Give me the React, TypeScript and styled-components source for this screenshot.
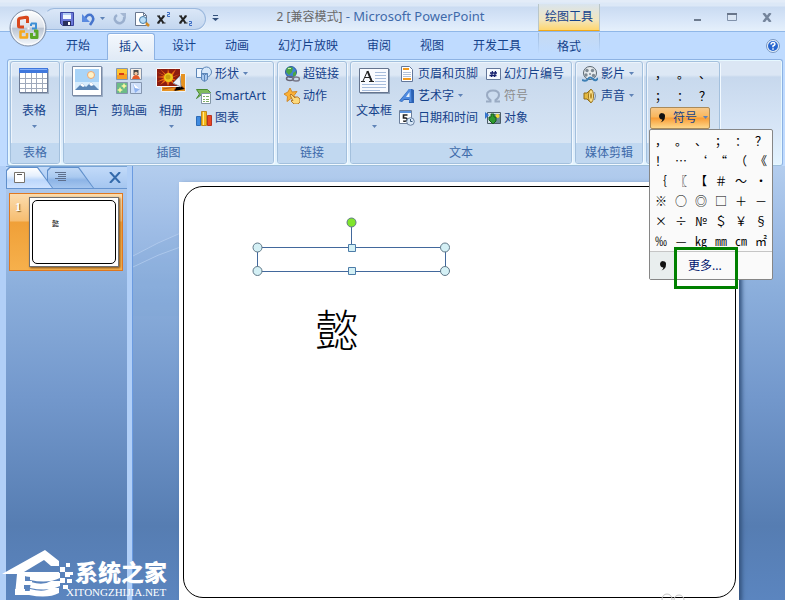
import React from "react";
import styled, { createGlobalStyle, css } from "styled-components";

const ui = `"Noto Sans", "Noto Sans CJK SC", sans-serif`;
const cjk = `"Noto Sans CJK SC", sans-serif`;

const Global = createGlobalStyle`
  * { box-sizing: border-box; }
  body { margin: 0; background: #bfdbff; font: 12px/16px ${ui}; color: #15428b; }
  button { font: inherit; color: inherit; background: none; border: 0; padding: 0; margin: 0; cursor: default; white-space: nowrap; }
  svg { display: block; flex: none; }
`;

const Window = styled.div`
  position: relative;
  height: 100vh;
  min-height: 400px;
  display: flex;
  flex-direction: column;
  overflow: hidden;
  background: #bfdbff;
`;

const TitleBar = styled.header`
  display: flex;
  align-items: stretch;
  height: 32px;
  padding-left: 44px;
  background: linear-gradient(#e3ecf8 0 2px, #dce8f7 3px 6px, #cadbf2 7px, #d8e6f8 20px, #e4effb 30px);
  border-bottom: 1px solid #8fb7e8;
`;

const QuickAccess = styled.div`
  display: flex;
  align-items: center;
  align-self: flex-start;
  gap: 6px;
  width: 162px;
  height: 22px;
  margin-top: 8px;
  padding-left: 14px;
  border: 1px solid #9cb9de;
  border-left-color: transparent;
  border-radius: 10px 11px 11px 0;
  background: linear-gradient(#dbe7f8, #cfdff3 50%, #c3d6ef);
  box-shadow: 0 1px 0 #f4f9ff;
`;

const IconButton = styled.button`
  display: flex;
  align-items: center;
  justify-content: center;
  gap: 4px;
  height: 20px;
  min-width: 16px;
`;

const More = styled(IconButton)`
  margin: 8px 0 0 1px;
`;

const Title = styled.h1`
  flex: 0 1 315px;
  margin: 0;
  padding-top: 8px;
  text-align: center;
  font-size: 13px;
  line-height: 16px;
  font-weight: 400;
  white-space: nowrap;
  overflow: hidden;
  color: #3e6aaa;
  span { font-size: 12px; color: #696969; }
`;

const ContextTitle = styled.div`
  width: 62px;
  margin-top: 4px;
  padding-top: 5px;
  text-align: center;
  white-space: nowrap;
  border: solid #b9c6c9;
  border-width: 0 1px;
  border-bottom: 1px solid #f0a818;
  background: linear-gradient(#d9e4ee, #f1e6c0 60%, #ffd66e);
`;

const WindowButtons = styled.div`
  display: flex;
  gap: 19px;
  margin-left: auto;
  padding: 7px 10px 0 0;
`;

const Orb = styled.button`
  position: absolute;
  left: 9px;
  top: 9px;
`;

const TabRow = styled.nav`
  display: flex;
  align-items: stretch;
  gap: 5px;
  height: 27px;
  padding: 1px 4px 0 54px;
  background: #bfdbff;
`;

const Tab = styled.button<{ $active?: boolean }>`
  padding: 0 12px;
  ${(p) =>
    p.$active &&
    css`
      border: 1px solid #8db2e3;
      border-bottom: 0;
      border-radius: 3px 3px 0 0;
      padding: 0 11px;
      margin-bottom: -1px;
      z-index: 1;
      background: linear-gradient(#f4f8fd, #e0eaf6);
      box-shadow: inset 0 1px 0 #fff;
    `}
`;

const ContextTab = styled.button`
  width: 62px;
  margin-bottom: 6px;
  padding-top: 6px;
  border: 1px solid;
  border-width: 0 1px;
  border-image: linear-gradient(#9db9dc, #bfdbff) 1;
  background: linear-gradient(#c6daf2, #bfdbff);
`;

const Help = styled(IconButton)`
  margin-left: auto;
  align-self: center;
`;

const Ribbon = styled.section`
  display: flex;
  gap: 3px;
  margin: 0 2px 0 7px;
  padding: 1px 2px;
  border: 1px solid #8db2e3;
  border-bottom-color: #9ebfdb;
  border-radius: 3px;
  background: linear-gradient(#dbe6f4 0 15px, #c7d8ed 17px, #d8e6f7 70px, #e3f4ff);
  box-shadow: inset 0 0 0 1px #e6f8ff;
`;

const Group = styled.section<{ $w: number }>`
  display: flex;
  flex-direction: column;
  flex: none;
  width: ${(p) => p.$w}px;
  border: 1px solid #a3c0dd;
  border-radius: 3px;
  background: linear-gradient(#dde8f5 0 13px, #c8d9ed 16px, #dbe8f6);
  box-shadow: 1px 1px 0 #f2f9ff, inset 1px 1px 0 #edf4fc;
`;

const GroupBody = styled.div`
  display: flex;
  height: 81px;
  padding: 1px 2px 0;
`;

const GroupLabel = styled.h2`
  height: 20px;
  margin: 0;
  padding-top: 1px;
  text-align: center;
  font-size: 12px;
  font-weight: 400;
  line-height: 18px;
  color: #3e6aaa;
  background: #c1d8f0;
  border-radius: 0 0 2px 2px;
`;

const BigButton = styled.button`
  display: flex;
  flex-direction: column;
  align-items: center;
  align-self: flex-start;
  width: 42px;
  padding-top: 2px;
  gap: 6px;
`;

const Column = styled.div`
  display: flex;
  flex-direction: column;
  align-items: flex-start;
`;

const SmallButton = styled.button<{ $off?: boolean }>`
  display: flex;
  align-items: center;
  gap: 3px;
  height: 22px;
  padding: 0 3px 0 4px;
  color: ${(p) => (p.$off ? "#8d8d8d" : "#15428b")};
`;

const SymbolColumn = styled.div`
  position: relative;
  padding-left: 1px;
`;

const SymbolRow = styled.div<{ $cols: number; $cell: number }>`
  display: grid;
  grid-template-columns: repeat(${(p) => p.$cols}, ${(p) => p.$cell}px);
`;

const Glyph = styled.button<{ $h: number }>`
  height: ${(p) => p.$h}px;
  font: 12px/16px ${cjk};
  color: #000;
`;

const SymbolButton = styled.button`
  display: flex;
  align-items: center;
  gap: 5px;
  width: 60px;
  height: 22px;
  padding: 0 3px 0 5px;
  border: 1px solid #a98a5a;
  border-radius: 2px;
  background: linear-gradient(#f7c98a, #f9b65c 45%, #f89c35 50%, #fdd78a);
`;

const Popup = styled.div`
  position: absolute;
  z-index: 5;
  left: 0;
  top: 66px;
  width: 124px;
  border: 1px solid #868686;
  border-radius: 2px;
  background: #fafafa;
`;

const PopupGrid = styled.div`
  padding: 1px 1px 0;
`;

const MoreRow = styled.div`
  display: flex;
  height: 28px;
  border-top: 1px solid #c5c5c5;
`;

const MoreIcon = styled.div`
  display: flex;
  align-items: center;
  justify-content: center;
  width: 25px;
  background: #e9eeee;
`;

const MoreSymbols = styled.button`
  padding: 0 13px;
  color: #00156e;
`;

const Highlight = styled.div`
  position: absolute;
  left: 24px;
  top: 117px;
  width: 64px;
  height: 42px;
  border: 3px solid #008000;
  pointer-events: none;
`;

const Body = styled.main`
  position: relative;
  flex: 1;
  display: flex;
  min-height: 0;
  padding-left: 6px;
  background: #b1cff7;
`;

const fill = css`
  background: linear-gradient(#b3cdee, #9fbde6 60px, #8cafdc 120px, #7398cc 230px, #567db2 360px, #5b85bf 434px);
`;

const Pane = styled.aside`
  width: 121px;
  ${fill}
`;

const PaneTabs = styled.div`
  display: flex;
  height: 23px;
  background: linear-gradient(#c2daf9, #a5c6f0);
  border-top: 1px solid #7aa5d8;
  border-bottom: 1px solid #6593cf;
`;

const PaneTab = styled.button<{ $active?: boolean }>`
  position: relative;
  display: flex;
  align-items: center;
  width: 47px;
  margin-right: -6px;
  padding-left: 8px;
  background: #5f8fcb;
  clip-path: polygon(0 3px, 3px 0, 68% 0, 100% 100%, 0 100%);
  z-index: ${(p) => (p.$active ? 1 : 0)};
  &::before {
    content: "";
    position: absolute;
    inset: 1px 1px 0;
    clip-path: polygon(0 3px, 3px 0, 67% 0, 100% 100%, 0 100%);
    background: ${(p) =>
      p.$active
        ? "linear-gradient(#ffffff, #e4effd 40%, #bcd7fb 60%, #cfe3ff)"
        : "linear-gradient(#c0d8f6, #a9c9f0 45%, #8db4e6 60%, #a5c6ef)"};
  }
  svg { position: relative; }
`;

const ClosePane = styled(IconButton)`
  margin-left: auto;
  padding-right: 6px;
`;

const SlideItem = styled.button`
  display: flex;
  align-items: flex-start;
  width: 114px;
  margin: 4px 3px;
  padding: 3px 3px 3px 5px;
  border: 1px solid #e07820;
  background: linear-gradient(#fbdcae, #f6bd70 27px, #f0a038 28px, #f6b04c);
`;

const SlideNumber = styled.span`
  flex: 1;
  padding-top: 3px;
  font: bold 12px/14px "Liberation Serif", serif;
  text-align: left;
  color: #fff;
  text-shadow: 1px 1px 1px #8a6428;
`;

const Thumb = styled.span`
  display: block;
  width: 90px;
  height: 70px;
  padding: 2px;
  border: 1px solid #707070;
  background: #fff;
  box-shadow: 1px 1px 2px #7a4d18;
`;

const ThumbFrame = styled.span`
  display: block;
  height: 64px;
  padding: 18px 0 0 19px;
  border: 1px solid #000;
  border-radius: 5px;
  font: 7px/8px ${cjk};
  text-align: left;
  color: #000;
`;

const Splitter = styled.div`
  width: 6px;
  border-right: 1px solid #6b9be0;
  background: #b1cff7;
`;

const Workspace = styled.section`
  position: relative;
  flex: 1;
  display: flex;
  padding: 16px 46px 0;
  overflow: hidden;
  ${fill}
`;

const Swoosh = styled.svg`
  position: absolute;
  left: 0;
  top: 0;
`;

const Slide = styled.article`
  position: relative;
  flex: 1;
  padding: 4px 3px 2px 4px;
  background: #fff;
  box-shadow: 3px 2px 4px #35547f;
`;

const SlideFrame = styled.div`
  height: 100%;
  border: 1px solid #000;
  border-radius: 20px;
`;

const Selection = styled.svg`
  position: absolute;
  left: 72px;
  top: 34px;
`;

const SlideText = styled.p`
  position: absolute;
  left: 136px;
  top: 114px;
  margin: 0;
  font: 300 44px/64px ${cjk};
  color: #000;
`;

const Rings = styled.svg`
  position: absolute;
  right: 54px;
  bottom: 0;
`;

const Watermark = styled.div`
  position: absolute;
  left: 0;
  bottom: 0;
  display: flex;
  align-items: flex-end;
  padding-left: 2px;
  color: #fff;
  white-space: nowrap;
`;

const WatermarkText = styled.div`
  margin-left: -8px;
  strong { display: block; padding-left: 9px; font: 900 23px/26px ${cjk}; }
  small { display: block; font: 11px/16px "Liberation Serif", serif; }
`;

const Arrow = () => (
  <svg width="7" height="4" viewBox="0 0 7 4"><path d="M1 0h5L3.500 3z" fill="#5f83b7" /></svg>
);

const OrbIcon = () => (
  <svg width="38" height="38" viewBox="0 0 38 38">
    <defs>
      <linearGradient id="orb" x2="0" y2="1">
        <stop stopColor="#fff" /><stop offset=".48" stopColor="#dce2ea" /><stop offset=".5" stopColor="#b9c3d1" /><stop offset="1" stopColor="#f8fbff" />
      </linearGradient>
    </defs>
    <circle cx="19" cy="19" r="18" fill="url(#orb)" stroke="#7e8ea6" />
    <circle cx="19" cy="19" r="16.500" fill="none" stroke="#fff" opacity=".8" />
    <g fill="none" strokeLinejoin="round">
      <path d="M18.500 14V9q0-1-1.500-.8l-6 1q-1.500.3-1.500 2V17q0 1 1.500 1h4" stroke="#d9481c" strokeWidth="3" />
      <path d="M22 14.500h5v5h-4M22 17v-2.500" stroke="#3d8fd6" strokeWidth="2" />
      <path d="M16 22.500h-4.500v6H18V24" stroke="#f6a81c" strokeWidth="2.500" />
      <path d="M22.500 24v4.500H28V22h-3" stroke="#5aa828" strokeWidth="3" />
    </g>
    <path d="M18.500 18.500h2v2h-2z" fill="#fff" />
  </svg>
);

const SaveIcon = () => (
  <svg width="16" height="16" viewBox="0 0 16 16">
    <path d="M1.500 1.500h13v13h-11l-2-2z" fill="#6a78d8" stroke="#3a44a0" />
    <path d="M4 2h8v6H4z" fill="#f2f8ff" /><path d="M4 2h8v2H4z" fill="#b3cdf5" />
    <path d="M4 10h8v5H4z" fill="#28305e" /><path d="M9 11h2v3H9z" fill="#fff" />
  </svg>
);

const UndoIcon = () => (
  <svg width="14" height="14" viewBox="0 0 14 14">
    <path d="M4 7q2-5 6-4 4 3 1 7l-2 3" fill="none" stroke="#4674cc" strokeWidth="2.500" />
    <path d="M1 2v8h8z" fill="#5a8ae0" />
  </svg>
);

const RedoIcon = () => (
  <svg width="14" height="14" viewBox="0 0 14 14">
    <path d="M4 3Q1 5 2 8q2 4 6 3 4-2 3-6" fill="none" stroke="#9aafce" strokeWidth="2.500" />
    <path d="M7 1h6v6z" fill="#a4b7d3" />
  </svg>
);

const PreviewIcon = () => (
  <svg width="16" height="16" viewBox="0 0 16 16">
    <path d="M1.500 1.500h8l3 3v10h-11z" fill="#fff" stroke="#6a7890" /><path d="M9.500 1.500v3h3" fill="none" stroke="#6a7890" />
    <circle cx="9" cy="9" r="3.500" fill="#b9def8" stroke="#477ca8" /><path d="m12 12 3 3" stroke="#d28b25" strokeWidth="2.500" />
  </svg>
);

const ScriptIcon = ({ up }: { up?: boolean }) => (
  <svg width="16" height="16" viewBox="0 0 16 16">
    <path d="m2.500 5 5 7M8 5l-6 7" stroke="#222" strokeWidth="2" />
    <path d="M1 5h3M6.500 5H9M1 12h2.500M6 12h3.500" stroke="#222" />
    <path d={up ? "M11 1.500h2.500v2h-2v2H14" : "M11 10.500h2.500v2h-2v2H14"} fill="none" stroke="#3b6cc4" />
  </svg>
);

const TableIcon = () => (
  <svg width="32" height="32" viewBox="0 0 32 32">
    <path d="M2 4h29v25H2z" fill="#728197" opacity=".5" /><path d="M1.500 3.500h28v24h-28z" fill="#fff" stroke="#6e7c96" />
    <path d="M1 3h29v5H1z" fill="#3f77dc" /><path d="M2 4h27v1H2z" fill="#87b1fa" />
    <path d="M2 13.500h27M2 18.500h27M2 23.500h27M7.500 8v19M13.500 8v19M18.500 8v19M24.500 8v19" stroke="#9fa9bb" />
  </svg>
);

const PictureIcon = () => (
  <svg width="32" height="32" viewBox="0 0 32 32">
    <path d="M2 2h30v30H2z" fill="#53688a" opacity=".4" /><path d="M1.500 1.500h29v29h-29z" fill="#fff" stroke="#7b8ba5" />
    <path d="M4 4h24v21H4z" fill="#a9d4f8" /><path d="M4 17h24v8H4z" fill="#d8edfd" />
    <circle cx="20" cy="10" r="3.500" fill="#fff3c8" stroke="#f0a66f" /><path d="m4 25 7-7 4 4 5-5 8 8z" fill="#5c88b8" /><path d="m9 20 2-2 3 3-2 1zM18 19l2-2 3 3-3 1z" fill="#fff" />
  </svg>
);

const ClipArtIcon = () => (
  <svg width="32" height="32" viewBox="0 0 32 32">
    <g stroke="#8495ae"><path d="M3.500 3.500h11v11h-11z" fill="#ffc52e" /><path d="M17.500 3.500h11v11h-11z" fill="#f6efe6" /><path d="M3.500 17.500h11v11h-11z" fill="#6cbb87" /><path d="M17.500 17.500h11v11h-11z" fill="#cfe0fa" /></g>
    <path d="M4 10h7v-1h3v5H4z" fill="#f7a023" /><path d="M6 8h5v2H6z" fill="#d83a17" />
    <path d="M20.500 5h5v5h-5z" fill="#444" /><path d="M19 14q1-4 4-4t4 4z" fill="#e25b28" /><circle cx="23" cy="8.500" r="1.700" fill="#efc49f" />
    <path d="m11 18 1 2 2 1-2 1-1 2-1-2-2-1 2-1zM7 22l1 2 2 1-2 1-1 2-1-2-2-1 2-1z" fill="#f8f6a0" />
    <path d="m20 18 7 6-5 4z" fill="#8fb2ef" /><path d="m20 18 7 6-5-1z" fill="#fff" />
  </svg>
);

const AlbumIcon = () => (
  <svg width="32" height="32" viewBox="0 0 32 32">
    <path d="M6.500 8.500h24v18h-24z" fill="#e69322" stroke="#eef2f7" /><path d="m19 26 4-8 7 6M8 24l12-2" stroke="#b85210" />
    <path d="M1.500 3.500h24v18h-24z" fill="#8d1d10" stroke="#f8fafc" />
    <path d="m2 7 9 4-6-7 7 6 1-6 2 6 6-6-4 8 8-3-8 4 6 3-6-1 3 5-5-4-2 5-2-5-6 4 4-5-7 2 7-4-7-1 7-1z" fill="#ee6b12" />
    <circle cx="13.500" cy="12.500" r="4.500" fill="#ecc81c" /><circle cx="13" cy="12" r="2.500" fill="#c9a00c" />
    <path d="m25 11-7 7 8 4z" fill="#eef1f6" stroke="#8e98a9" />
  </svg>
);

const TextBoxIcon = () => (
  <svg width="32" height="32" viewBox="0 0 32 32">
    <path d="M2 4h30v25H2z" fill="#4f6382" opacity=".5" /><path d="M1.500 3.500h29v24h-29z" fill="#f9fbff" stroke="#65748e" />
    <path d="M17 7.500h11M17 10.500h11M17 13.500h11M17 16.500h11M4 19.500h24M4 22.500h24M4 25.500h18" stroke="#a8bddc" />
    <path d="m5 16 4.500-10L14 16M7 12.500h5" fill="none" stroke="#222" /><path d="m9.500 6 4 10" stroke="#222" strokeWidth="2" /><path d="M3 16.500h4M11 16.500h5" stroke="#222" />
  </svg>
);

type Kind = "shape" | "smart" | "chart" | "globe" | "action" | "header" | "art" | "date" | "number" | "omega" | "object" | "film" | "sound" | "comma";

const drawings: Record<Kind, React.ReactNode> = {
  shape: (<g stroke="#5c86b8"><path d="M.5 2.500h9v9h-9z" fill="#eef6ff" /><circle cx="10.500" cy="6" r="5" fill="#d5e7fa" /><path d="M5.500 7.500h6v6l-3 2-3-2z" fill="#a9c9ef" /><path d="m5.500 7.500 3 1.500 3-1.500M8.500 9v6" fill="none" /></g>),
  smart: (<g><path d="M.5 1.500h11l3 3-2 2h-7l-5 4 3-4.500z" fill="#7fbb5c" stroke="#4a8a32" /><path d="M5.500 5.500h9v10h-9z" fill="#fff" stroke="#8296a6" /><path d="M7 8.500h2M10 8.500h3M7 11.500h2M10 11.500h3M7 13.500h2M10 13.500h3" stroke="#7faf68" /></g>),
  chart: (<g><path d="M.5 6.500h4v9h-4z" fill="#3f8be0" stroke="#2f6bb5" /><path d="M5.500 1.500h5v14h-5z" fill="#f5b81a" stroke="#c08a1c" /><path d="M7 2h1v13H7z" fill="#ffe88a" /><path d="M11.500 5.500h4v10h-4z" fill="#e94722" stroke="#b83322" /></g>),
  globe: (<g><circle cx="7" cy="6" r="5.500" fill="#3f80d4" stroke="#315da0" /><path d="M3 2q3-2 6 0L8 6l-3 3-3-3zM9 7l3-2v4l-3 2z" fill="#4aa545" /><path d="M4 2.500h3" stroke="#c9f0b0" /><ellipse cx="6" cy="12.500" rx="3.500" ry="2" fill="none" stroke="#667" strokeWidth="1.500" /><ellipse cx="12" cy="13" rx="3.500" ry="2" fill="none" stroke="#778" strokeWidth="1.500" /></g>),
  action: (<g><path d="m6 0 2 4 5-.5-3 4 2 4-5-1-4 3 .5-5L0 6l4-2z" fill="#fbb034" stroke="#d08a2a" /><path d="m6 7 1-1 4 4V9q3-1 5 2v3l-2 2h-4l-3-3 1-1 1 1z" fill="#fbd97c" stroke="#b4792c" /></g>),
  header: (<g><path d="M2.500.5h8l3 3v12h-11z" fill="#fff" stroke="#63779a" /><path d="M4 2h6v2H4zM4 12h8v2H4z" fill="#f29a1f" /><path d="M4 6.500h8M4 8.500h8M4 10.500h8" stroke="#b4c2d8" /></g>),
  art: (<g><path d="m10 1-10 12 3 1 2-2h5v3h5V2l-2-1z" fill="#2c62b4" /><path d="M10 1 1 13l2 .5L5 11h5l.5 3h2l-.5-13z" fill="#4f8be0" /><path d="m7 9 3.500-5v5z" fill="#e4effb" /></g>),
  date: (<g><path d="M.5.500h12v13H.5z" fill="#fff" stroke="#6c7f9c" /><path d="M1 1h11v2H1z" fill="#5b93dd" /><path d="M8.500 5H4.500v3h2q2.200.2 1.700 2.200-.8 1.500-4 .8" fill="none" stroke="#222" strokeWidth="1.600" /><circle cx="11.500" cy="11.500" r="3.800" fill="#d8e8f8" stroke="#6c83a3" /><path d="M11.500 9v2.500h2" fill="none" stroke="#34567c" /></g>),
  number: (<g><path d="M1.500 2.500h14v11h-14z" fill="#f6faff" stroke="#63779a" /><path d="m7.500 5-1 6M10.500 5l-1 6M5 7h7M4.500 9.500h7" stroke="#15206e" strokeWidth="1.300" /></g>),
  omega: <path d="M1 13.500h4.500v-1.500Q2 10 2 7q0-4.500 6-4.500T14 7q0 3-3.500 5v1.500H15" fill="none" stroke="#9aabc3" strokeWidth="2" />,
  object: (<g><path d="M2.500 2.500h13v11h-13z" fill="#d5e2e8" stroke="#4b5d69" /><path d="M9 4h6v9H9z" fill="#6f8d98" /><circle cx="12.500" cy="6" r="2" fill="#f4d83a" /><path d="M6 4h3v3h2v4l-3 3-4-4V7h2z" fill="#2e9a2f" stroke="#165c1b" /><path d="m0 2 4 3-4 4z" fill="#3374cf" /></g>),
  film: (<g><circle cx="8" cy="7" r="6.500" fill="#e6ebee" stroke="#59656e" /><g fill="#7e8a94"><circle cx="5" cy="4.500" r="1.700" /><circle cx="10.500" cy="4.500" r="1.700" /><circle cx="4" cy="9" r="1.700" /><circle cx="8" cy="8" r="1" /><circle cx="11.500" cy="9.500" r="1.700" /></g><path d="M0 14q4 2 6-1t5 0 5-1" fill="none" stroke="#3c7fb5" strokeWidth="2" /></g>),
  sound: (<g><path d="M2 5h3l4-4v14l-4-4H2z" fill="#e4b83f" stroke="#8e6a17" /><ellipse cx="9" cy="8" rx="2.500" ry="6.500" fill="#fbe08a" stroke="#9a7520" /><ellipse cx="9" cy="8" rx="1" ry="3" fill="#b48a2a" /><path d="M12.500 4q2 4 0 8" fill="none" stroke="#7b8fa8" /></g>),
  comma: <path d="M4 5a4 4 0 0 1 8 1q0 6-6 8 2.500-2 2.500-4Q4 9.500 4 5z" fill="#111" />,
};

const SmallIcon = ({ kind, size = 16 }: { kind: Kind; size?: number }) => (
  <svg width={size} height={size} viewBox="0 0 16 16">{drawings[kind]}</svg>
);

const Command = ({ kind, label, menu, off }: { kind: Kind; label: string; menu?: boolean; off?: boolean }) => (
  <SmallButton $off={off} disabled={off}>
    <SmallIcon kind={kind} />
    <span>{label}</span>
    {menu && <Arrow />}
  </SmallButton>
);

const Big = ({ icon, label, menu }: { icon: React.ReactNode; label: string; menu?: boolean }) => (
  <BigButton>
    {icon}
    <span>{label}</span>
    {menu && <Arrow />}
  </BigButton>
);

const HouseLogo = () => (
  <svg width="72" height="50" viewBox="0 0 72 50">
    <path d="M0 24 43 0l14 11v5h-8l-7-6-20 12h35v5H32q-7 0-9-1v5h7v4h-8v6h9v4H13l2-21z" fill="#fff" />
    <path d="M28 25q12 4 22-2h8v5q-12 6-30 2zM29 32q12 4 20-1h9v5q-12 6-30 2zM28 39q14 4 21-1h8v5q-11 6-30 2z" fill="#fff" />
    <path d="M13 39h10v6H13z" fill="#fff" />
    <path d="M58 17h5v5h-5zM64 13h4v4h-4zM63 22h5v5h-5zM58 28h5v5h-5zM65 29h5v4h-5zM61 35h5v4h-5zM67 22h4v3h-4z" fill="#fff" />
  </svg>
);

const tabs = ["开始", "插入", "设计", "动画", "幻灯片放映", "审阅", "视图", "开发工具"];
const recent = ["，", "。", "、", "；", "：", "？"];
const symbols = [..."，。、；：？！…‘“（《｛〖【＃～·※○◎□＋－×÷№＄￥§‰—㎏㎜㎝㎡"];

export default function App() {
  return (
    <>
      <Global />
      <Window>
        <TitleBar>
          <QuickAccess>
            <IconButton aria-label="保存"><SaveIcon /></IconButton>
            <IconButton aria-label="撤消"><UndoIcon /><Arrow /></IconButton>
            <IconButton aria-label="重复"><RedoIcon /></IconButton>
            <IconButton aria-label="打印预览"><PreviewIcon /></IconButton>
            <IconButton aria-label="上标"><ScriptIcon up /></IconButton>
            <IconButton aria-label="下标"><ScriptIcon /></IconButton>
          </QuickAccess>
          <More aria-label="自定义快速访问工具栏">
            <svg width="7" height="8" viewBox="0 0 7 8"><path d="M1 1.500h5" stroke="#34517c" /><path d="M0 4h7L3.500 7z" fill="#34517c" /></svg>
          </More>
          <Title><span>2 [兼容模式]</span> - Microsoft PowerPoint</Title>
          <ContextTitle>绘图工具</ContextTitle>
          <WindowButtons>
            <IconButton aria-label="最小化"><svg width="9" height="10" viewBox="0 0 9 10"><path d="M1 8h7" stroke="#6d7b8e" strokeWidth="2" /></svg></IconButton>
            <IconButton aria-label="最大化"><svg width="10" height="8" viewBox="0 0 10 8"><path d="M.5 1.500h9v6h-9z" fill="#dbe6f4" stroke="#8192ab" /><path d="M0 1h10" stroke="#68758a" strokeWidth="2" /></svg></IconButton>
            <IconButton aria-label="关闭"><svg width="10" height="9" viewBox="0 0 10 9"><path d="m1.500 0 7 9M8.500 0l-7 9" stroke="#75859c" strokeWidth="2.500" /></svg></IconButton>
          </WindowButtons>
        </TitleBar>
        <Orb aria-label="Office"><OrbIcon /></Orb>
        <TabRow>
          {tabs.map((t) => <Tab key={t} $active={t === "插入"}>{t}</Tab>)}
          <ContextTab>格式</ContextTab>
          <Help aria-label="帮助">
            <svg width="14" height="14" viewBox="0 0 14 14"><circle cx="7" cy="7" r="6.500" fill="#e8f2fc" stroke="#7796c0" /><circle cx="7" cy="7" r="5" fill="#2866cf" /><path d="M5 5.500q.2-2 2-2t2 1.500q0 1-2 2v1.200M7 9.200v1.500" fill="none" stroke="#fff" strokeWidth="1.500" /></svg>
          </Help>
        </TabRow>
        <Ribbon>
          <Group $w={50}>
            <GroupBody><Big icon={<TableIcon />} label="表格" menu /></GroupBody>
            <GroupLabel>表格</GroupLabel>
          </Group>
          <Group $w={211}>
            <GroupBody>
              <Big icon={<PictureIcon />} label="图片" />
              <Big icon={<ClipArtIcon />} label="剪贴画" />
              <Big icon={<AlbumIcon />} label="相册" menu />
              <Column>
                <Command kind="shape" label="形状" menu />
                <Command kind="smart" label="SmartArt" />
                <Command kind="chart" label="图表" />
              </Column>
            </GroupBody>
            <GroupLabel>插图</GroupLabel>
          </Group>
          <Group $w={70}>
            <GroupBody>
              <Column>
                <Command kind="globe" label="超链接" />
                <Command kind="action" label="动作" />
              </Column>
            </GroupBody>
            <GroupLabel>链接</GroupLabel>
          </Group>
          <Group $w={222}>
            <GroupBody>
              <Big icon={<TextBoxIcon />} label="文本框" menu />
              <Column>
                <Command kind="header" label="页眉和页脚" />
                <Command kind="art" label="艺术字" menu />
                <Command kind="date" label="日期和时间" />
              </Column>
              <Column>
                <Command kind="number" label="幻灯片编号" />
                <Command kind="omega" label="符号" off />
                <Command kind="object" label="对象" />
              </Column>
            </GroupBody>
            <GroupLabel>文本</GroupLabel>
          </Group>
          <Group $w={68}>
            <GroupBody>
              <Column>
                <Command kind="film" label="影片" menu />
                <Command kind="sound" label="声音" menu />
              </Column>
            </GroupBody>
            <GroupLabel>媒体剪辑</GroupLabel>
          </Group>
          <Group $w={74}>
            <GroupBody>
              <SymbolColumn>
                <SymbolRow $cols={3} $cell={22}>
                  {recent.map((s) => <Glyph key={s} $h={22}>{s}</Glyph>)}
                </SymbolRow>
                <SymbolButton><SmallIcon kind="comma" size={12} />符号<Arrow /></SymbolButton>
                <Popup>
                  <PopupGrid>
                    <SymbolRow $cols={6} $cell={20}>
                      {symbols.map((s) => <Glyph key={s} $h={20}>{s}</Glyph>)}
                    </SymbolRow>
                  </PopupGrid>
                  <MoreRow>
                    <MoreIcon><SmallIcon kind="comma" size={12} /></MoreIcon>
                    <MoreSymbols>更多...</MoreSymbols>
                  </MoreRow>
                  <Highlight />
                </Popup>
              </SymbolColumn>
            </GroupBody>
            <GroupLabel aria-label="符号" />
          </Group>
        </Ribbon>
        <Body>
          <Pane>
            <PaneTabs>
              <PaneTab $active aria-label="幻灯片"><svg width="11" height="11" viewBox="0 0 11 11"><path d="M.5.500h10v10H.5z" fill="#fff" stroke="#77736c" /><path d="M3 2.500h5" stroke="#555" /></svg></PaneTab>
              <PaneTab aria-label="大纲"><svg width="12" height="11" viewBox="0 0 12 11"><path d="M0 .5h11M3 2.500h8M3 4.500h8M0 6.500h11M3 8.500h8" stroke="#5e6f8d" /></svg></PaneTab>
              <ClosePane aria-label="关闭窗格"><svg width="12" height="11" viewBox="0 0 12 11"><path d="m1 0 10 11M11 0 1 11" stroke="#346aab" strokeWidth="2" /></svg></ClosePane>
            </PaneTabs>
            <SlideItem>
              <SlideNumber>1</SlideNumber>
              <Thumb><ThumbFrame>懿</ThumbFrame></Thumb>
            </SlideItem>
          </Pane>
          <Splitter />
          <Workspace>
            <Swoosh width="50" height="150" viewBox="0 0 50 150">
              <path d="M0 90Q25 76 50 66v84H0z" fill="#7fa3d5" opacity=".2" />
              <path d="M0 90Q25 76 50 66M0 101Q25 88 50 80" fill="none" stroke="#c7dcf7" opacity=".5" />
            </Swoosh>
            <Slide>
              <SlideFrame />
              <Selection width="200" height="62" viewBox="0 0 200 62">
                <g fill="none" stroke="#42689c"><path d="M100.500 8v24M6.500 31.500h188v24H6.500z" /></g>
                <g fill="#d4f0f5" stroke="#607888">
                  <circle cx="6.500" cy="31.500" r="4.500" /><circle cx="194" cy="31.500" r="4.500" /><circle cx="6.500" cy="55" r="4.500" /><circle cx="194" cy="55" r="4.500" />
                  <path stroke="#4d7ca8" d="M97.500 28.500h7v7h-7zM97.500 51.500h7v7h-7z" />
                  <circle cx="100.500" cy="6.500" r="4.500" fill="#80e52c" />
                </g>
              </Selection>
              <SlideText>懿</SlideText>
              <Rings width="24" height="7" viewBox="0 0 24 7"><g fill="none" stroke="#c4c4c4"><circle cx="6" cy="6" r="5" /><circle cx="18" cy="7" r="5" /></g></Rings>
            </Slide>
          </Workspace>
          <Watermark>
            <HouseLogo />
            <WatermarkText><strong>系统之家</strong><small>XITONGZHIJIA.NET</small></WatermarkText>
          </Watermark>
        </Body>
      </Window>
    </>
  );
}
